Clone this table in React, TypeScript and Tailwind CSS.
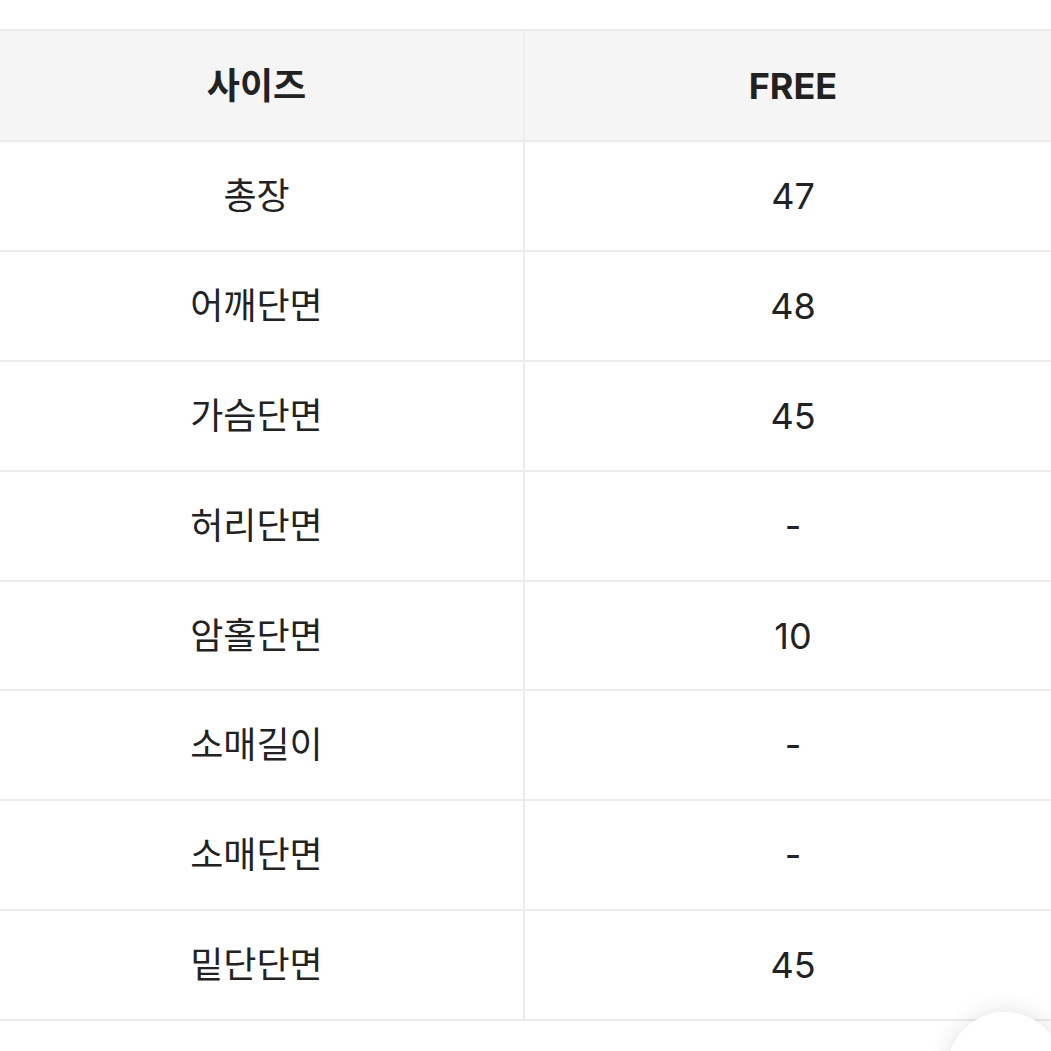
import React from "react";

const rows: [string, string][] = [
  ["총장", "47"],
  ["어깨단면", "48"],
  ["가슴단면", "45"],
  ["허리단면", "-"],
  ["암홀단면", "10"],
  ["소매길이", "-"],
  ["소매단면", "-"],
  ["밑단단면", "45"],
];

export default function App() {
  return (
    <div
      className="relative w-[1051px] h-[1051px] overflow-hidden bg-white text-[#222222]"
      style={{ fontFamily: 'Inter, "Noto Sans CJK KR", sans-serif' }}
    >
      <div className="ml-[-10px] mt-[29px] w-[1071px] border-t-2 border-b-2 border-[#ececec]">
        <div className="flex h-[109px] bg-[#f5f5f5]">
          <div className="w-[533px] flex items-center justify-center text-[36px] leading-none font-bold">사이즈</div>
          <div className="flex-1 border-l-2 border-[#ececec] flex items-center justify-center text-[36px] leading-none font-bold">FREE</div>
        </div>
        {rows.map(([k, v]) => (
          <div key={k} className="flex h-[109.9px] border-t-2 border-[#ececec]">
            <div className="w-[533px] flex items-center justify-center text-[36px] leading-none">{k}</div>
            <div className="flex-1 border-l-2 border-[#ececec] flex items-center justify-center text-[36px] leading-none">{v}</div>
          </div>
        ))}
      </div>
      <div className="absolute left-[947px] top-[1012px] w-[116px] h-[116px] rounded-full bg-white shadow-[0_0_24px_rgba(0,0,0,0.12)]" />
    </div>
  );
}
